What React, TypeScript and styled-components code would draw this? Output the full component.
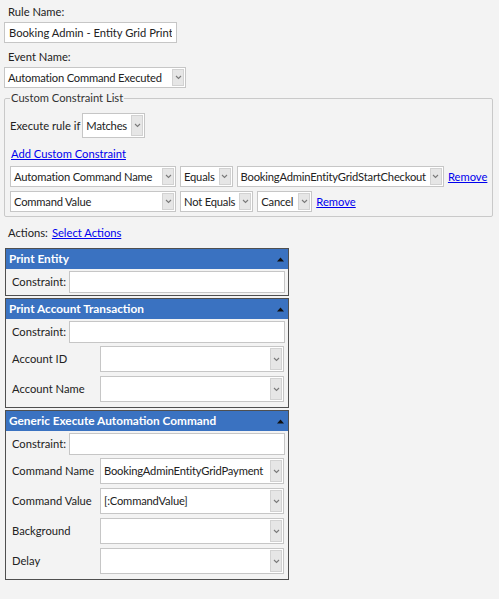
import React from "react";
import styled, { createGlobalStyle } from "styled-components";

const GlobalStyle = createGlobalStyle`
  body {
    margin: 0;
    background: #f3f3f3;
    font-family: Lato, "Open Sans", sans-serif;
    font-size: 11.2px;
    line-height: 16px;
    color: #222;
  }
`;

const Page = styled.div`
  padding: 3px 4px 20px 4px;
  width: 487px;
`;

const FieldLabel = styled.div`
  height: 19px;
  line-height: 18px;
  padding-left: 4px;
`;

const TextBox = styled.input<{ $w: number; $h?: number }>`
  box-sizing: border-box;
  width: ${(p) => p.$w}px;
  height: ${(p) => p.$h ?? 21}px;
  border: 1px solid #c6c6c6;
  background: #fff;
  font: inherit;
  color: #222;
  padding: 0 4px;
  margin: 0;
  outline: none;
`;

const DropBox = styled.div<{ $w: number; $h?: number }>`
  box-sizing: border-box;
  display: inline-flex;
  align-items: stretch;
  min-width: ${(p) => p.$w}px;
  height: ${(p) => p.$h ?? 21}px;
  border: 1px solid #c6c6c6;
  background: #fff;
  flex-shrink: 0;
`;

const DropText = styled.span`
  flex: 1 0 auto;
  display: flex;
  align-items: center;
  padding: 0 3px;
  letter-spacing: -0.2px;
  white-space: nowrap;
`;

const DropButton = styled.span`
  width: 10px;
  margin: 1px;
  background: #e6e6e6;
  border: 1px solid #d2d2d2;
  display: flex;
  align-items: center;
  justify-content: center;
`;

const Chevron = () => (
  <svg width="7" height="5" viewBox="0 0 7 5">
    <path d="M1 1 L3.5 3.5 L6 1" fill="none" stroke="#7a7a7a" strokeWidth="1.1" />
  </svg>
);

const Dropdown = ({ w, h, value }: { w: number; h?: number; value?: string }) => (
  <DropBox $w={w} $h={h}>
    <DropText>{value}</DropText>
    <DropButton>
      <Chevron />
    </DropButton>
  </DropBox>
);

const Block = styled.div<{ $mb?: number }>`
  margin-bottom: ${(p) => p.$mb ?? 5}px;
`;

const Fieldset = styled.fieldset`
  margin: 0;
  padding: 7px 5px 4px 5px;
  width: 486px;
  box-sizing: border-box;
  border: 1px solid #c9c9c9;
  border-radius: 2px;
`;

const Legend = styled.legend`
  padding: 0 1px;
  margin-left: 0;
  color: #333;
`;

const InlineRow = styled.div<{ $gap?: number }>`
  display: flex;
  align-items: center;
  gap: ${(p) => p.$gap ?? 4}px;
  min-height: 21px;
`;

const Link = styled.a`
  color: #0000ee;
  text-decoration: underline;
  cursor: pointer;
  white-space: nowrap;
`;

const LinkLine = styled.div`
  margin: 8px 0 4px 1px;
`;

const ConstraintRows = styled.div`
  display: flex;
  flex-direction: column;
  gap: 4px;
`;

const ActionsLine = styled.div`
  display: flex;
  gap: 4px;
  align-items: center;
  margin: 8px 0 7px 4px;
`;

const Panel = styled.div`
  width: 284px;
  box-sizing: border-box;
  border: 1px solid #4f4f4f;
  margin-left: 1px;
  margin-bottom: 2px;
  background: #f3f3f3;
`;

const PanelHeader = styled.div`
  height: 20px;
  background: #3a72c1;
  color: #fff;
  font-weight: 700;
  font-size: 11.8px;
  display: flex;
  align-items: center;
  justify-content: space-between;
  padding: 0 4px 0 3px;
`;

const PanelBody = styled.div`
  padding: 2px 3px 2px 6px;
  display: flex;
  flex-direction: column;
  gap: 3px;
`;

const PropRow = styled.div`
  display: grid;
  grid-template-columns: 88px 184px;
  align-items: center;
  white-space: nowrap;
  & + & {
    margin-top: 1px;
  }
  &:last-child {
    margin-bottom: 3px;
  }
`;

const Triangle = () => (
  <svg width="7" height="5" viewBox="0 0 7 5">
    <path d="M0 4.5 L3.5 0.5 L7 4.5 Z" fill="#111" />
  </svg>
);

const ActionPanel = ({
  title,
  fields,
}: {
  title: string;
  fields: { label: string; value?: string }[];
}) => (
  <Panel>
    <PanelHeader>
      <span>{title}</span>
      <Triangle />
    </PanelHeader>
    <PanelBody>
      <InlineRow $gap={3}>
        <span>Constraint:</span>
        <TextBox $w={216} $h={22} />
      </InlineRow>
      {fields.map((f) => (
        <PropRow key={f.label}>
          <span>{f.label}</span>
          <Dropdown w={184} h={26} value={f.value} />
        </PropRow>
      ))}
    </PanelBody>
  </Panel>
);

export default function App() {
  return (
    <Page>
      <GlobalStyle />
      <Block>
        <FieldLabel>Rule Name:</FieldLabel>
        <TextBox $w={173} defaultValue="Booking Admin - Entity Grid Print" />
      </Block>
      <Block $mb={2}>
        <FieldLabel>Event Name:</FieldLabel>
        <Dropdown w={182} value="Automation Command Executed" />
      </Block>
      <Fieldset>
        <Legend>Custom Constraint List</Legend>
        <InlineRow $gap={2}>
          <span>Execute rule if</span>
          <Dropdown w={63} h={25} value="Matches" />
        </InlineRow>
        <LinkLine>
          <Link>Add Custom Constraint</Link>
        </LinkLine>
        <ConstraintRows>
          <InlineRow>
            <Dropdown w={166} value="Automation Command Name" />
            <Dropdown w={50} value="Equals" />
            <Dropdown w={205} value="BookingAdminEntityGridStartCheckout" />
            <Link>Remove</Link>
          </InlineRow>
          <InlineRow>
            <Dropdown w={166} value="Command Value" />
            <Dropdown w={71} value="Not Equals" />
            <Dropdown w={55} value="Cancel" />
            <Link>Remove</Link>
          </InlineRow>
        </ConstraintRows>
      </Fieldset>
      <ActionsLine>
        <span>Actions:</span>
        <Link>Select Actions</Link>
      </ActionsLine>
      <ActionPanel title="Print Entity" fields={[]} />
      <ActionPanel
        title="Print Account Transaction"
        fields={[{ label: "Account ID" }, { label: "Account Name" }]}
      />
      <ActionPanel
        title="Generic Execute Automation Command"
        fields={[
          { label: "Command Name", value: "BookingAdminEntityGridPayment" },
          { label: "Command Value", value: "[:CommandValue]" },
          { label: "Background" },
          { label: "Delay" },
        ]}
      />
    </Page>
  );
}
